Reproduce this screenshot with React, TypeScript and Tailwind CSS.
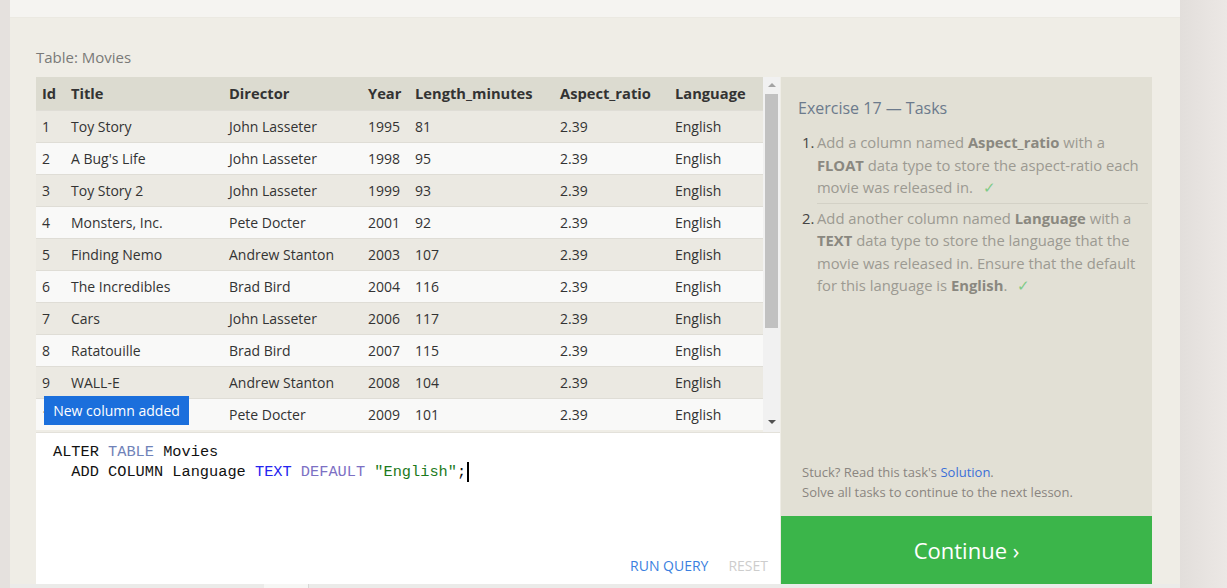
const movies = [
  { id: 1, title: "Toy Story", director: "John Lasseter", year: 1995, length: 81 },
  { id: 2, title: "A Bug's Life", director: "John Lasseter", year: 1998, length: 95 },
  { id: 3, title: "Toy Story 2", director: "John Lasseter", year: 1999, length: 93 },
  { id: 4, title: "Monsters, Inc.", director: "Pete Docter", year: 2001, length: 92 },
  { id: 5, title: "Finding Nemo", director: "Andrew Stanton", year: 2003, length: 107 },
  { id: 6, title: "The Incredibles", director: "Brad Bird", year: 2004, length: 116 },
  { id: 7, title: "Cars", director: "John Lasseter", year: 2006, length: 117 },
  { id: 8, title: "Ratatouille", director: "Brad Bird", year: 2007, length: 115 },
  { id: 9, title: "WALL-E", director: "Andrew Stanton", year: 2008, length: 104 },
  { id: 10, title: "Up", director: "Pete Docter", year: 2009, length: 101 },
];

const cols = "grid grid-cols-[29px_158px_139px_47px_145px_115px_1fr]";

const App = () => {
  return (
    <div className="flex h-[588px] w-[1227px] overflow-hidden bg-[#e5e1de] font-['Open_Sans',sans-serif]">
      <div className="w-[10px]" />
      <div className="flex w-[1170px] flex-col">
        {/* top band */}
        <div className="h-[18px] border-b border-[#ebe9e2] bg-[#f5f4f1]" />

        <div className="flex flex-1 flex-col bg-[#efede6] pl-[26px] pr-[28px]">
          <div className="pt-[28px] pb-[9px] text-[15px] leading-[22px] text-[#7a7a78]">Table: Movies</div>

          <div className="flex h-[507px]">
            {/* left column */}
            <div className="flex w-[744px] flex-col">
              <div className="relative flex h-[355px] overflow-hidden">
                <div className="flex-1 text-[14px] text-[#333]">
                  <div className={`${cols} h-[33px] items-center bg-[#dcdbd0] text-[14.7px] font-bold`}>
                    <div className="px-[6px]">Id</div>
                    <div className="px-[6px]">Title</div>
                    <div className="px-[6px]">Director</div>
                    <div className="px-[6px]">Year</div>
                    <div className="px-[6px]">Length_minutes</div>
                    <div className="px-[6px]">Aspect_ratio</div>
                    <div className="px-[6px]">Language</div>
                  </div>
                  {movies.map((m, i) => (
                    <div
                      key={m.id}
                      className={`${cols} h-[32px] items-center border-t border-[#dfddd6] ${i % 2 === 0 ? "bg-[#ebe9e2]" : "bg-[#f9f9f8]"}`}
                    >
                      <div className="px-[6px]">{m.id}</div>
                      <div className="px-[6px]">{m.title}</div>
                      <div className="px-[6px]">{m.director}</div>
                      <div className="px-[6px]">{m.year}</div>
                      <div className="px-[6px]">{m.length}</div>
                      <div className="px-[6px]">2.39</div>
                      <div className="px-[6px]">English</div>
                    </div>
                  ))}
                </div>

                {/* scrollbar */}
                <div className="relative flex w-[17px] flex-col items-center bg-[#f1f1f1]">
                  <div className="mt-[6px] h-0 w-0 border-x-[4px] border-b-[4px] border-x-transparent border-b-[#a3a3a3]" />
                  <div className="mt-[7px] h-[234px] w-[13px] bg-[#c1c1c1]" />
                  <div className="absolute bottom-[8px] h-0 w-0 border-x-[4px] border-t-[4px] border-x-transparent border-t-[#505050]" />
                </div>

                {/* toast */}
                <div className="absolute left-[8px] top-[319px] flex h-[29px] w-[145px] items-center justify-center bg-[#1b6fdc] text-[14px] text-white">
                  New column added
                </div>
              </div>

              {/* editor */}
              <div className="flex flex-1 flex-col border-t border-[#e3e1da] bg-white">
                <div className="flex-1 whitespace-pre pl-[17px] pt-[9px] font-['Liberation_Mono',monospace] text-[15.3px] leading-[20px] text-[#111]">
                  <div>
                    ALTER <span className="text-[#6f82b8]">TABLE</span> Movies
                  </div>
                  <div>
                    {"  ADD COLUMN Language "}
                    <span className="text-[#2424f0]">TEXT</span>
                    {" "}
                    <span className="text-[#7c70c4]">DEFAULT</span>
                    {" "}
                    <span className="text-[#1c7a1c]">"English"</span>
                    ;
                    <span className="ml-[1px] inline-block h-[20px] w-[2px] bg-black align-top" />
                  </div>
                </div>
                <div className="flex justify-end gap-[20px] pb-[8px] pr-[12px] text-[14px] leading-[20px]">
                  <span className="text-[#3b7fe0]">RUN QUERY</span>
                  <span className="text-[#cdcdcd]">RESET</span>
                </div>
              </div>
            </div>

            {/* right column */}
            <div className="ml-[1px] flex w-[371px] flex-col">
              <div className="flex flex-1 flex-col bg-[#e2e0d5] pl-[17px] pr-[4px] pt-[20px]">
                <div className="text-[16px] leading-[22px] text-[#6c7a8c]">Exercise 17 — Tasks</div>
                <ol className="mt-[12px] pl-[4px] text-[14.8px] leading-[22.5px] text-[#9c9a92]">
                  <li className="flex">
                    <span className="w-[15px] font-normal text-[#444]">1.</span>
                    <div className="w-[334px] border-b border-[#d3d1c6] pb-[4px]">
                      Add a column named <b className="text-[#8a8880]">Aspect_ratio</b> with a <b className="text-[#8a8880]">FLOAT</b> data type to store the aspect-ratio each movie was released in.
                      <span className="ml-[10px] text-[#7fcb87]">✓</span>
                    </div>
                  </li>
                  <li className="mt-[3px] flex">
                    <span className="w-[15px] font-normal text-[#444]">2.</span>
                    <div className="w-[330px]">
                      Add another column named <b className="text-[#8a8880]">Language</b> with a <b className="text-[#8a8880]">TEXT</b> data type to store the language that the movie was released in. Ensure that the default for this language is <b className="text-[#8a8880]">English</b>.
                      <span className="ml-[10px] text-[#7fcb87]">✓</span>
                    </div>
                  </li>
                </ol>
                <div className="mt-auto pb-[14px] pl-[4px] text-[13px] leading-[20px] text-[#8a8580]">
                  <div>
                    Stuck? Read this task's <span className="text-[#3a6fd8]">Solution</span>.
                  </div>
                  <div>Solve all tasks to continue to the next lesson.</div>
                </div>
              </div>
              <div className="flex h-[68px] items-center justify-center bg-[#3bb54a] text-[22px] text-white">
                Continue ›
              </div>
            </div>
          </div>
          <div className="flex-1" />
        </div>
        {/* bottom strip */}
        <div className="flex h-[4px] bg-[#ebebe9]">
          <div className="ml-[254px] w-[44px] bg-[#f6f6f4]" />
          <div className="w-[1px] bg-[#d8d8d6]" />
        </div>
      </div>
      <div className="flex-1 bg-gradient-to-r from-[#e2dedb] to-[#ece8e5]" />
    </div>
  );
};

export default App;
